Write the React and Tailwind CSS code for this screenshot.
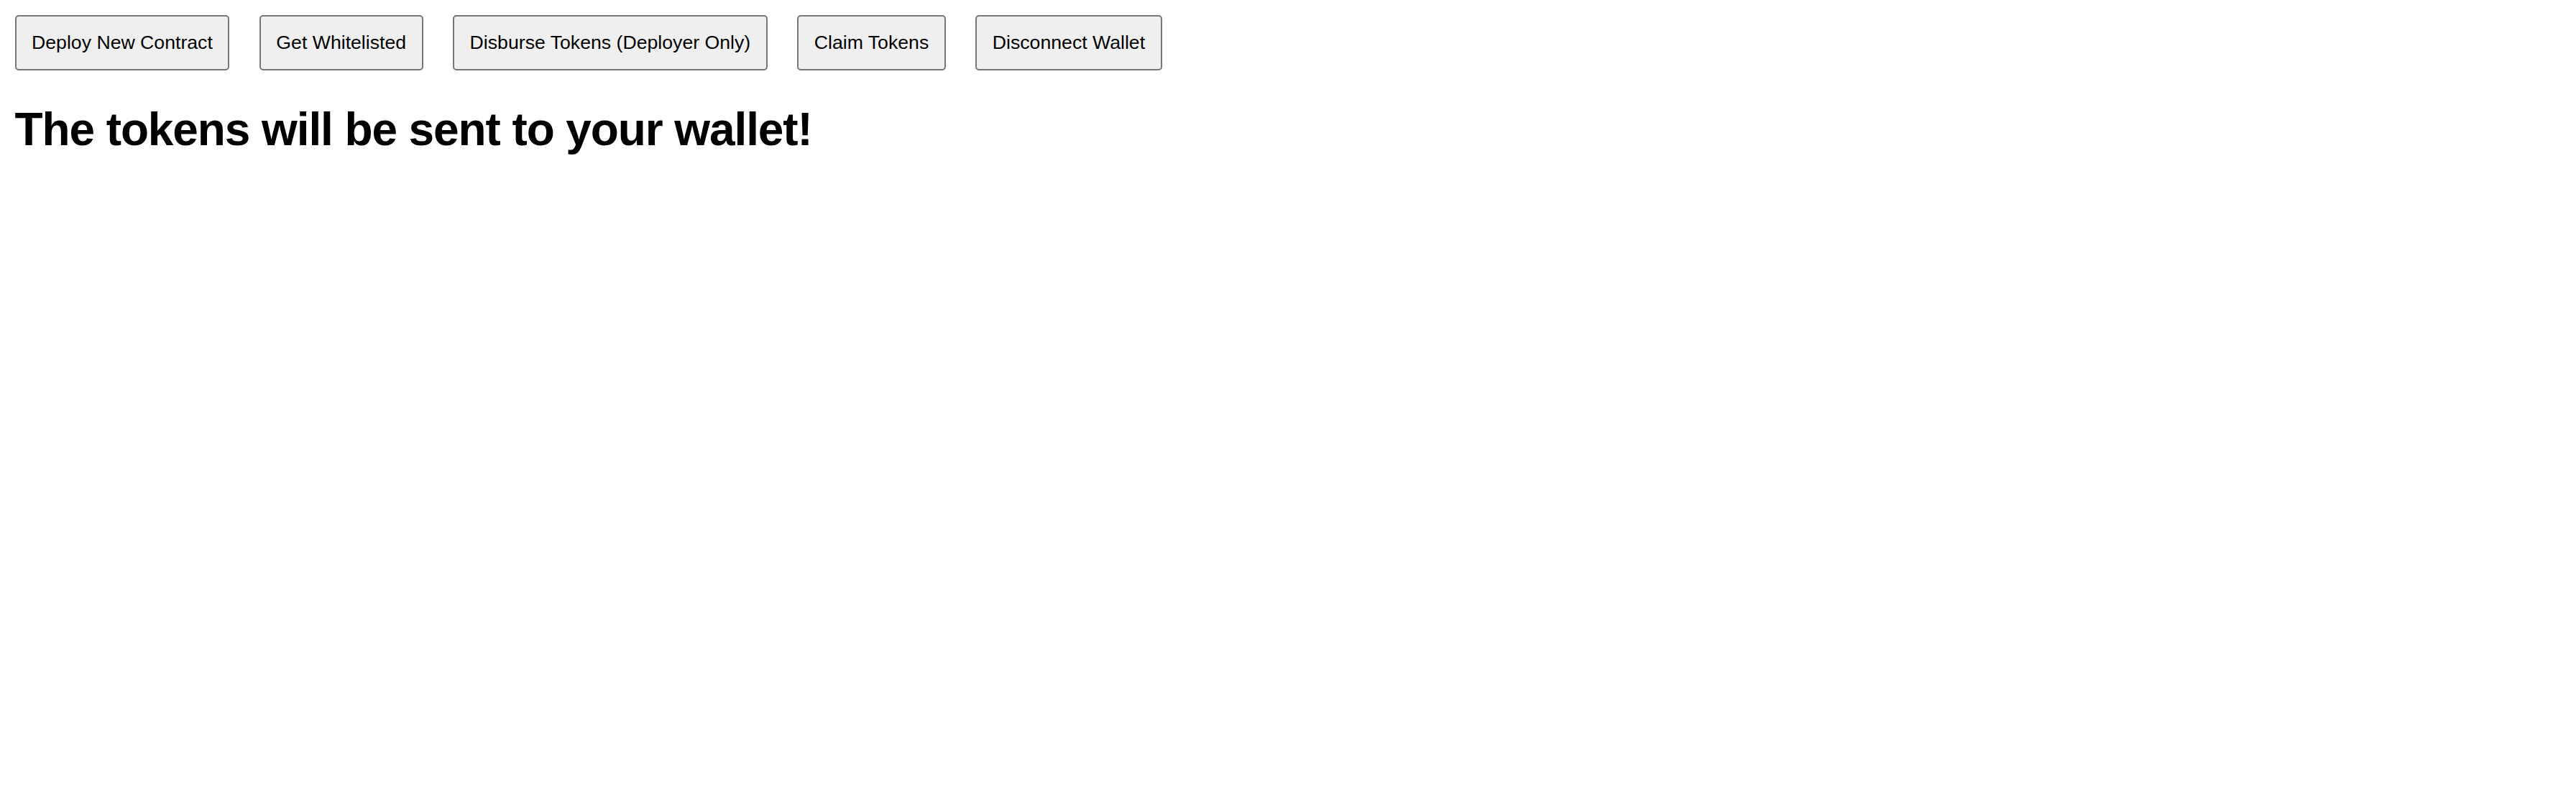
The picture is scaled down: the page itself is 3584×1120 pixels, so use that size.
const actions = [
  'Deploy New Contract',
  'Get Whitelisted',
  'Disburse Tokens (Deployer Only)',
  'Claim Tokens',
  'Disconnect Wallet',
]

export default function App() {
  return (
    <div className="min-h-screen bg-white px-[20.5px] pt-[20.5px] font-['Liberation_Sans',Arial,sans-serif] text-black">
      <div className="flex items-start gap-[41.5px]">
        {actions.map(label => (
          <button
            key={label}
            type="button"
            className="rounded-[5px] border-2 border-[#767676] bg-[#efefef] px-[21.5px] py-[21px] text-[26.67px] leading-[normal] text-black"
          >
            {label}
          </button>
        ))}
      </div>
      <h1 className="mt-[45px] text-[64px] font-bold leading-[normal] tracking-[-1.1px]">The tokens will be sent to your wallet!</h1>
    </div>
  )
}
